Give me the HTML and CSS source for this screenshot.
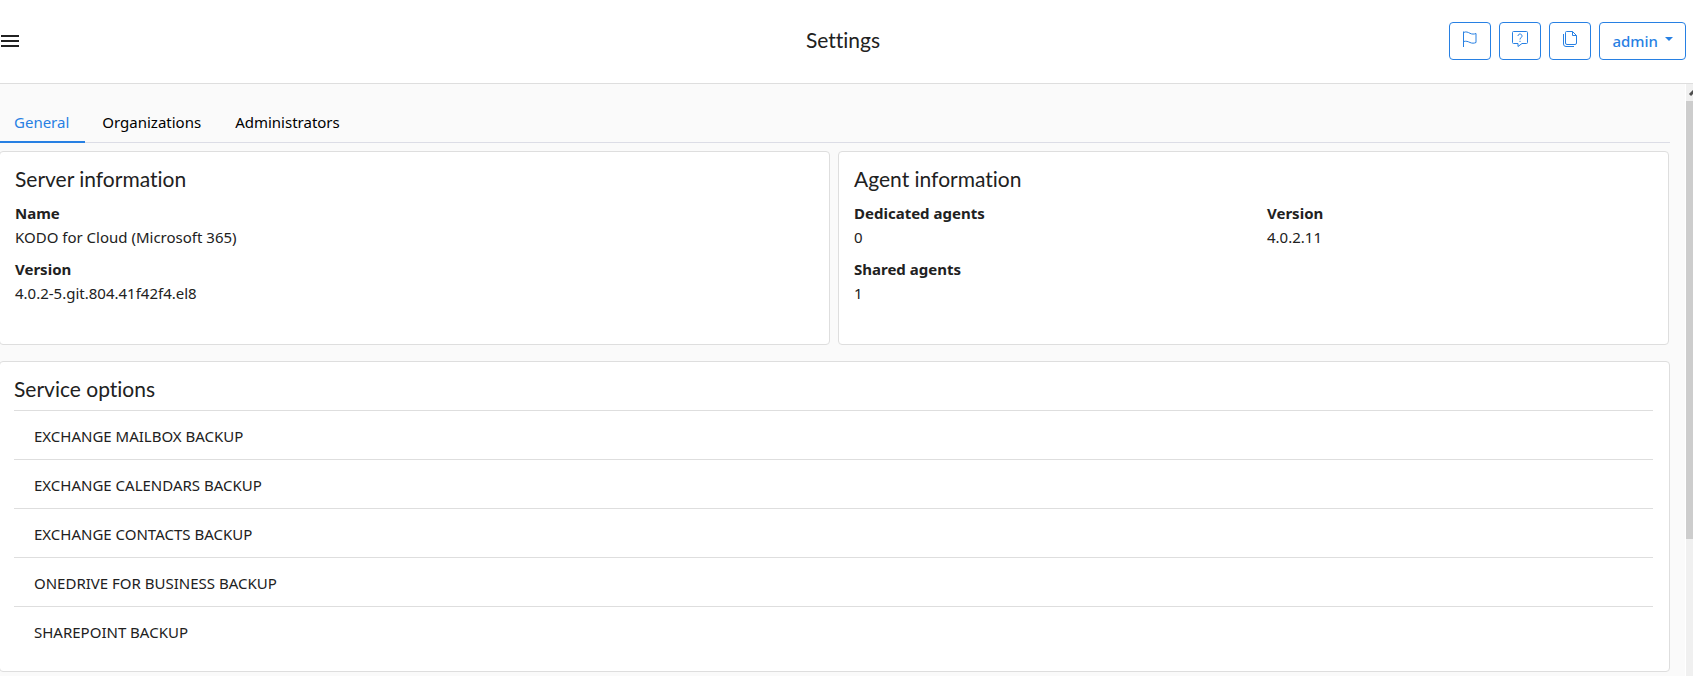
FILE: index.html
```html
<!DOCTYPE html>
<html lang="en">
<head>
<meta charset="utf-8">
<title>Settings</title>
<link rel="stylesheet" href="styles.css">
</head>
<body>
<header class="topbar">
  <div class="topbar-side">
    <button class="menu-button" type="button" aria-label="Menu">
      <svg width="18" height="12" viewBox="0 0 18 12" fill="currentColor" shape-rendering="crispEdges"><path d="M0 0h18v2H0zM0 5h18v2H0zM0 10h18v2H0z"/></svg>
    </button>
  </div>
  <h1 class="page-title">Settings</h1>
  <div class="topbar-side topbar-actions">
    <button class="action" type="button" aria-label="Tasks">
      <svg class="icon" viewBox="0 0 16 16"><path d="M1.500 16V.5M1.500 1.500C4 .3 6 1.200 8 2.300c2 1 4 1 6 .2v9c-2 .9-4 .9-6 0-2-1-4-1.700-6.500-1"/></svg>
    </button>
    <button class="action" type="button" aria-label="Help">
      <svg class="icon" viewBox="0 0 16 16"><path d="M1.500.5h13a1 1 0 0 1 1 1v10a1 1 0 0 1-1 1H10l-4 3v-3H1.500a1 1 0 0 1-1-1v-10a1 1 0 0 1 1-1z"/><path d="M6 5a2 2 0 1 1 3.300 1.500C8.500 7 8 7.400 8 8.500M8 9.800v1.200"/></svg>
    </button>
    <button class="action" type="button" aria-label="Documents">
      <svg class="icon" viewBox="0 0 16 16"><path d="M4.500.5h6l4 4V12a1.500 1.500 0 0 1-1.500 1.500H5A1.500 1.500 0 0 1 3.500 12V1.500a1 1 0 0 1 1-1z"/><path d="M10.500.5v4h4M1.500 3v10a2.500 2.500 0 0 0 2.500 2.500h8"/></svg>
    </button>
    <button class="action action-user" type="button">admin <span class="caret"></span></button>
  </div>
</header>
<div class="body">
  <main class="content">
    <nav class="tabs">
      <a class="tab tab-active" href="#general">General</a>
      <a class="tab" href="#organizations">Organizations</a>
      <a class="tab" href="#administrators">Administrators</a>
    </nav>
    <div class="info-row">
      <section class="card">
        <h2 class="card-title">Server information</h2>
        <dl class="facts">
          <dt>Name</dt><dd>KODO for Cloud (Microsoft 365)</dd>
          <dt>Version</dt><dd>4.0.2-5.git.804.41f42f4.el8</dd>
        </dl>
      </section>
      <section class="card">
        <h2 class="card-title">Agent information</h2>
        <div class="fact-columns">
          <dl class="facts">
            <dt>Dedicated agents</dt><dd>0</dd>
            <dt>Shared agents</dt><dd>1</dd>
          </dl>
          <dl class="facts">
            <dt>Version</dt><dd>4.0.2.11</dd>
          </dl>
        </div>
      </section>
    </div>
    <section class="card services">
      <h2 class="card-title">Service options</h2>
      <ul class="service-list">
        <li>EXCHANGE MAILBOX BACKUP</li>
        <li>EXCHANGE CALENDARS BACKUP</li>
        <li>EXCHANGE CONTACTS BACKUP</li>
        <li>ONEDRIVE FOR BUSINESS BACKUP</li>
        <li>SHAREPOINT BACKUP</li>
      </ul>
    </section>
  </main>
  <div class="scrollbar" aria-hidden="true">
    <svg class="scroll-arrow" width="7" height="17" viewBox="0 0 7 17"><path d="M4 11l4-4" stroke="#505050" stroke-width="3"/></svg>
    <div class="scroll-thumb"></div>
  </div>
</div>
</body>
</html>
```

FILE: styles.css
```css
* { box-sizing: border-box; }

body {
  margin: 0;
  height: 100vh;
  display: flex;
  flex-direction: column;
  overflow: hidden;
  background: #fff;
  color: #212121;
  font-family: "Noto Sans", "Open Sans", sans-serif;
  font-size: 15px;
  line-height: 24px;
}

h1, h2, dl, dd, ul { margin: 0; padding: 0; }
button { font: inherit; cursor: pointer; }

.topbar {
  flex: none;
  display: flex;
  align-items: center;
  height: 84px;
  padding: 0 7px 2px 0;
  border-bottom: 1px solid #dedede;
}
.topbar-side { flex: 1; display: flex; }
.topbar-actions { justify-content: flex-end; gap: 8px; }

.menu-button {
  display: flex;
  padding: 0 1px;
  border: 0;
  background: none;
  color: #212121;
}

.page-title, .card-title {
  font-family: Lato, sans-serif;
  font-size: 21px;
  font-weight: 400;
  font-variant-ligatures: none;
  line-height: 22px;
}
.page-title { padding-bottom: 2px; }

.action {
  display: flex;
  align-items: center;
  height: 38px;
  padding: 0 12px;
  border: 1px solid #2780e3;
  border-radius: 4px;
  background: #fff;
  color: #2780e3;
}
.action-user { font-weight: 500; gap: 7px; }
.icon {
  width: 16px;
  height: 16px;
  margin-bottom: 4px;
  overflow: visible;
  fill: none;
  stroke: currentColor;
  stroke-width: 1;
}
.caret {
  margin-bottom: 3px;
  border: 4px solid transparent;
  border-top-color: currentColor;
  border-bottom: 0;
}

.body {
  flex: 1;
  min-height: 0;
  display: flex;
}
.content {
  flex: 1;
  overflow: hidden;
  padding: 20px 15px 0 0;
  border-right: 1px solid #fff;
  background: #fafafa;
}

.tabs {
  display: flex;
  border-bottom: 1px solid #dcdde6;
}
.tab {
  margin-bottom: -1px;
  padding: 6px 17px 7px;
  border-bottom: 2px solid transparent;
  color: #000;
  text-decoration: none;
}
.tab:first-child { padding: 6px 16px 7px 14px; }
.tab-active { color: #2780e3; border-color: #2780e3; }

.info-row {
  display: grid;
  grid-template-columns: 1fr 1fr;
  gap: 8px;
  margin: 8px 1px 16px -1px;
}
.card {
  padding: 16px 16px 0 15px;
  border: 1px solid #dedede;
  border-radius: 4px;
  background: #fff;
}
.info-row .card { padding-bottom: 31px; }

.facts { padding-top: 11px; }
.facts dt { font-weight: 700; }
.facts dd { margin-bottom: 8px; }
.fact-columns { display: grid; grid-template-columns: 1fr 1fr; gap: 28px; }

.services { margin-left: -1px; padding: 16px 16px 15px 14px; }
.service-list { list-style: none; margin-top: 10px; }
.service-list li {
  padding: 13px 20px 11px;
  border-top: 1px solid #dedede;
}
.service-list li:last-child { padding-bottom: 12px; }

.scrollbar { flex: none; width: 7px; background: #f0f0f0; }
.scroll-arrow { display: block; }
.scroll-thumb { height: 74%; background: #cdcdcd; }
```
